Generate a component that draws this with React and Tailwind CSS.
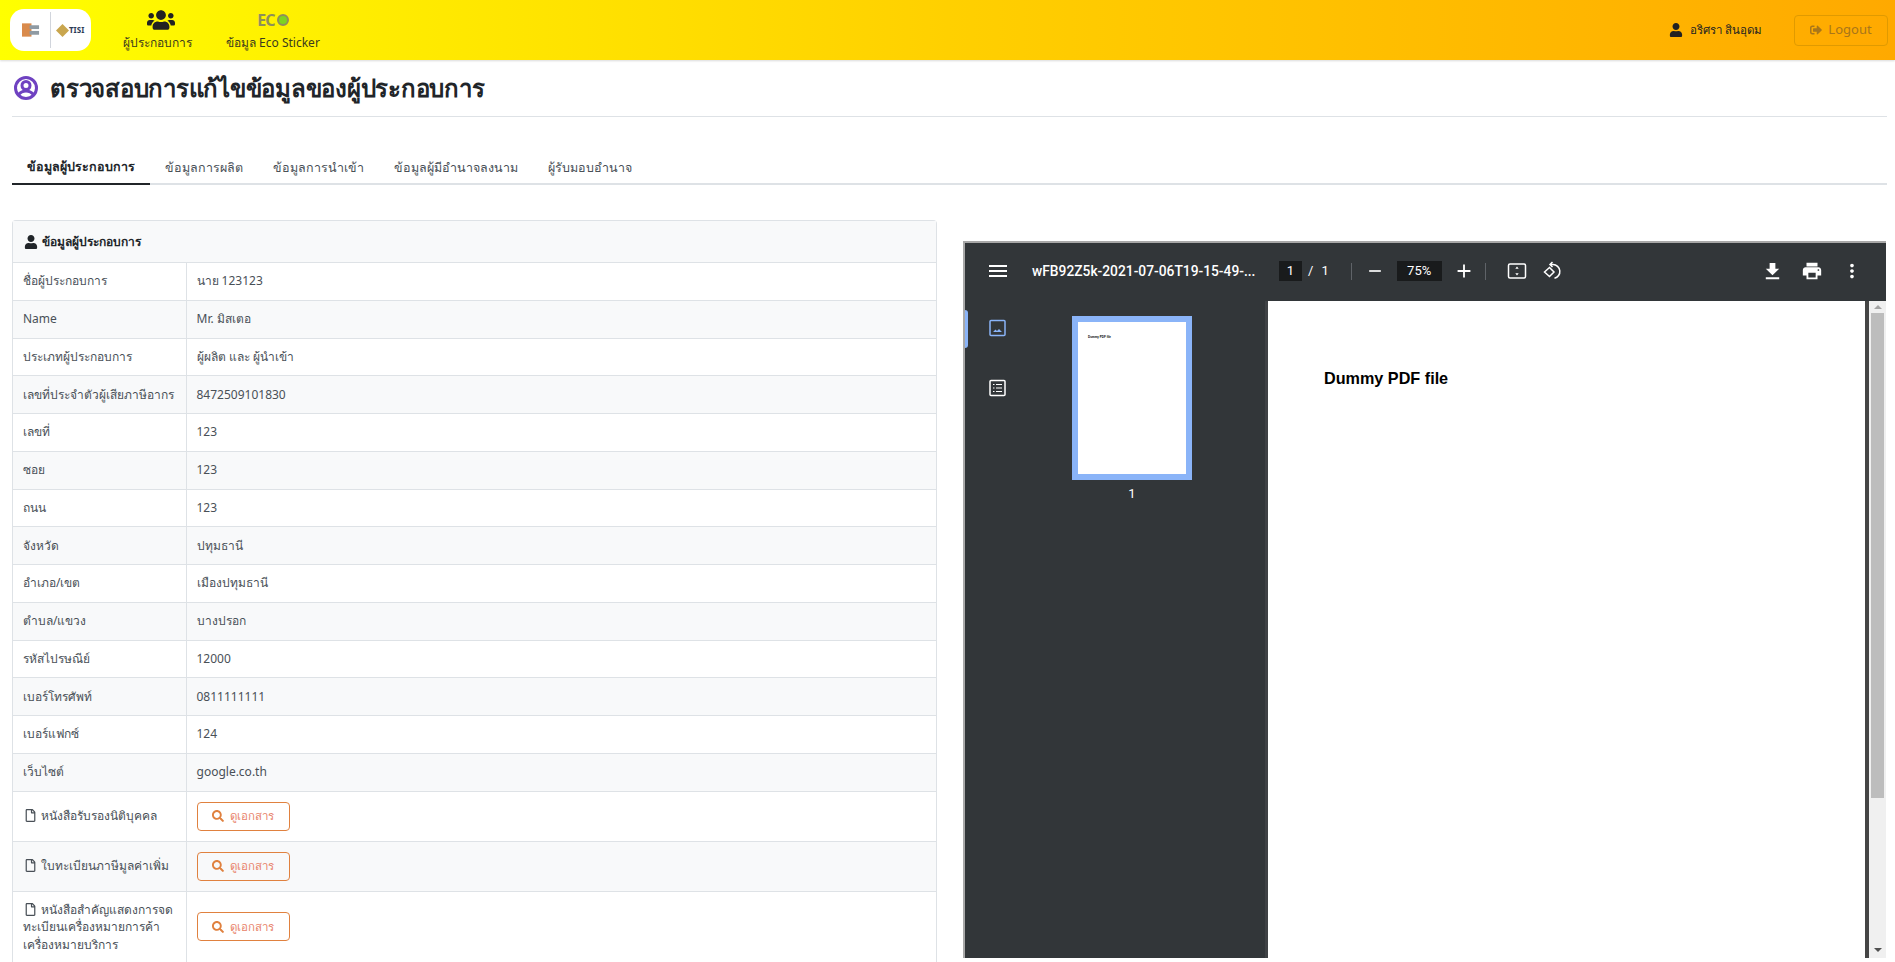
import React from 'react'
import { FaUsers, FaUser, FaRegFile, FaSearch, FaSignOutAlt } from 'react-icons/fa'
import { MdMenu, MdFileDownload, MdPrint, MdMoreVert, MdAdd, MdRemove } from 'react-icons/md'

const rows = [
  ['ชื่อผู้ประกอบการ', 'นาย 123123'],
  ['Name', 'Mr. มิสเตอ'],
  ['ประเภทผู้ประกอบการ', 'ผู้ผลิต และ ผู้นำเข้า'],
  ['เลขที่ประจำตัวผู้เสียภาษีอากร', '8472509101830'],
  ['เลขที่', '123'],
  ['ซอย', '123'],
  ['ถนน', '123'],
  ['จังหวัด', 'ปทุมธานี'],
  ['อำเภอ/เขต', 'เมืองปทุมธานี'],
  ['ตำบล/แขวง', 'บางปรอก'],
  ['รหัสไปรษณีย์', '12000'],
  ['เบอร์โทรศัพท์', '0811111111'],
  ['เบอร์แฟกซ์', '124'],
  ['เว็บไซต์', 'google.co.th'],
]

const docs = [
  ['หนังสือรับรองนิติบุคคล'],
  ['ใบทะเบียนภาษีมูลค่าเพิ่ม'],
  ['หนังสือสำคัญแสดงการจด', 'ทะเบียนเครื่องหมายการค้า', 'เครื่องหมายบริการ'],
]

const tabs = ['ข้อมูลผู้ประกอบการ', 'ข้อมูลการผลิต', 'ข้อมูลการนำเข้า', 'ข้อมูลผู้มีอำนาจลงนาม', 'ผู้รับมอบอำนาจ']

function Logo() {
  return (
    <div className="flex h-[42px] w-[81px] items-center rounded-[14px] bg-white pl-[12px]">
      <svg width="18" height="14" viewBox="0 0 19 14">
        <rect x="0" y="0" width="10" height="14" fill="#d98a4b" />
        <rect x="8" y="2" width="10" height="4" fill="#8f9aa3" />
        <rect x="8" y="8" width="10" height="4" fill="#8f9aa3" />
      </svg>
      <div className="ml-[10px] mr-[5px] h-[36px] w-px bg-gray-300" />
      <svg width="13" height="13" viewBox="0 0 12 12">
        <path d="M6 0 12 6 6 12 0 6Z" fill="#c9a64e" />
      </svg>
      <span className="text-[8px] font-bold text-[#2b3a55]">TISI</span>
    </div>
  )
}

function NavItem({ icon, label, className }) {
  return (
    <div className={`-mt-[3px] flex flex-col items-center text-[12px] leading-[17px] text-[#3b3b1e] ${className}`}>
      <div className="flex h-[27px] items-center">{icon}</div>
      <span>{label}</span>
    </div>
  )
}

function Header() {
  return (
    <div className="flex h-[60px] shrink-0 items-center bg-gradient-to-r from-[#ffff00] via-[#ffd000] to-[#ffa900] pl-[10px] pr-[7px] shadow-[0_1px_2px_rgba(0,0,0,0.15)]">
      <Logo />
      <NavItem className="ml-[32px]" icon={<FaUsers className="ml-[6px] text-[28px] text-[#222]" />} label="ผู้ประกอบการ" />
      <NavItem
        className="ml-[34px]"
        icon={
          <span className="flex items-center text-[16px] font-bold leading-none tracking-[-1px] text-[#8f8f5a]">
            EC
            <span className="ml-[2px] block h-[12px] w-[12px] rounded-full border-2 border-[#8f8f5a] bg-[#7ed321]" />
          </span>
        }
        label="ข้อมูล Eco Sticker"
      />
      <div className="ml-auto flex items-center text-[11.5px] text-[#222]">
        <FaUser className="mr-[7px] text-[14px]" />
        <span>อริศรา สินอุดม</span>
      </div>
      <button className="ml-[32px] flex h-[31px] w-[94px] items-center justify-center gap-[6px] rounded border border-[#e09a00] text-[13px] text-[#a9761a]">
        <FaSignOutAlt className="text-[12px]" />
        Logout
      </button>
    </div>
  )
}

function DocButton() {
  return (
    <button className="flex h-[29px] w-[93px] items-center justify-center gap-[6px] rounded border border-[#e0813f] text-[11.5px] text-[#e8836b]">
      <FaSearch className="text-[12px] text-[#e0813f]" />
      ดูเอกสาร
    </button>
  )
}

function InfoCard() {
  return (
    <div className="w-[925px] shrink-0 rounded-t border border-b-0 border-[#dee2e6] text-[12px] text-[#495057]">
      <div className="flex h-[41px] items-center gap-[4px] bg-[#f8f9fa] pl-[11px] font-bold text-[#212529]">
        <FaUser className="text-[14px]" />
        ข้อมูลผู้ประกอบการ
      </div>
      <table className="w-full border-collapse">
        <tbody>
          {rows.map(([label, value], i) => (
            <tr key={label} className={`h-[37.75px] border-t border-[#dee2e6] ${i % 2 ? 'bg-[#f8f9fa]' : 'bg-white'}`}>
              <td className="w-[173px] whitespace-nowrap border-r border-[#dee2e6] pl-[10px]">{label}</td>
              <td className="pl-[10px]">{value}</td>
            </tr>
          ))}
          {docs.map((lines, i) => (
            <tr key={lines[0]} className={`h-[50px] border-t border-[#dee2e6] ${i === 1 ? 'bg-[#f8f9fa]' : 'bg-white'}`}>
              <td className="w-[173px] whitespace-nowrap border-r border-[#dee2e6] py-[9px] pl-[10px] leading-[17.5px]">
                <FaRegFile className="ml-[1px] mr-[4px] inline align-[-2px] text-[13px]" />
                {lines.map((line, j) => (
                  <React.Fragment key={line}>
                    {j > 0 && <br />}
                    {line}
                  </React.Fragment>
                ))}
              </td>
              <td className="pl-[10px]">
                <DocButton />
              </td>
            </tr>
          ))}
        </tbody>
      </table>
    </div>
  )
}

function PdfViewer() {
  return (
    <div className="flex h-[717px] w-[923px] flex-col border-t-2 border-l-2 border-[#a8a8a8] font-['Roboto',sans-serif] text-white">
      <div className="flex h-[58px] shrink-0 items-center bg-[#323639] pb-[2px] text-[13px]">
        <MdMenu className="ml-[21px] text-[24px]" />
        <span className="ml-[22px] w-[230px] text-[13.8px] font-medium">wFB92Z5k-2021-07-06T19-15-49-...</span>
        <span className="ml-[17px] flex h-[20px] w-[23px] items-center justify-center bg-[#191b1c]">1</span>
        <span className="ml-[6px]">/</span>
        <span className="ml-[8px]">1</span>
        <div className="ml-[22px] h-[17px] w-px bg-[#5f6368]" />
        <MdRemove className="ml-[13px] text-[20px]" />
        <span className="ml-[12px] flex h-[20px] w-[45px] items-center justify-center bg-[#191b1c]">75%</span>
        <MdAdd className="ml-[11px] text-[22px]" />
        <div className="ml-[10px] h-[17px] w-px bg-[#5f6368]" />
        <svg className="ml-[21px]" width="20" height="20" viewBox="0 0 20 20" fill="none" stroke="white" strokeWidth="1.5">
          <rect x="1.5" y="3" width="17" height="14" rx="1.5" />
          <path d="M10 5.500 8.300 7.800h3.400ZM10 14.500l-1.700-2.300h3.400Z" fill="white" stroke="none" />
        </svg>
        <svg className="ml-[16px]" width="20" height="20" viewBox="0 0 20 20" fill="none" stroke="white" strokeWidth="1.5">
          <path d="M9.500 1 7 3.500 9.500 6M7 3.500h3a7 7 0 0 1 1.500 13.800" />
          <path d="M1.500 11 6.500 6.500l4.500 4.500-4.500 4.500Z" />
        </svg>
        <MdFileDownload className="ml-auto text-[23px]" />
        <MdPrint className="ml-[17px] text-[22px]" />
        <MdMoreVert className="ml-[18px] mr-[23px] text-[22px]" />
      </div>
      <div className="flex min-h-0 flex-1">
        <div className="flex w-[300px] shrink-0 bg-[#323639]">
          <div className="relative w-[52px] shrink-0 pt-[18px]">
            <div className="absolute left-0 top-[9px] h-[38px] w-[3px] rounded-r bg-[#8ab4f8]" />
            <svg className="ml-[24px]" width="17" height="18" viewBox="0 0 17 18" fill="none" stroke="#8ab4f8" strokeWidth="1.5">
              <rect x="1" y="1.5" width="15" height="15" rx="1" />
              <path d="M4 13l2.500-2.500L8 12l2-2 3 3Z" fill="#8ab4f8" stroke="none" />
            </svg>
            <svg className="ml-[24px] mt-[42px]" width="17" height="18" viewBox="0 0 17 18" fill="none" stroke="white" strokeWidth="1.5">
              <rect x="1" y="1.5" width="15" height="15" rx="1" />
              <path d="M4 5.500h1.500M7 5.500h6M4 9h1.500M7 9h6M4 12.500h1.500M7 12.500h6" strokeWidth="1.2" />
            </svg>
          </div>
          <div className="flex flex-1 flex-col items-center pr-[18px] pt-[15px]">
            <div className="h-[164px] w-[120px] border-[6px] border-[#8ab4f8] bg-white pl-[10px] pt-[13px]">
              <span className="block font-['Liberation_Sans',sans-serif] text-[3px] font-bold leading-[4px] text-black">Dummy PDF file</span>
            </div>
            <span className="mt-[4px] text-[13px]">1</span>
          </div>
        </div>
        <div className="w-[3px] shrink-0 bg-[#3f4245]" />
        <div className="flex-1 bg-white pl-[56px] pt-[65px] font-['Liberation_Sans',sans-serif] text-[16.2px] font-bold text-black">
          Dummy PDF file
        </div>
        <div className="w-[4px] shrink-0 bg-[#454545]" />
        <div className="flex w-[17px] shrink-0 flex-col items-center bg-[#f0f0f0]">
          <span className="mt-[4px] h-0 w-0 border-x-[4px] border-b-[4px] border-x-transparent border-b-[#a3a3a3]" />
          <div className="mt-[4px] h-[485px] w-[13px] bg-[#bdbdbd]" />
          <span className="mb-[6px] mt-auto h-0 w-0 border-x-[4px] border-t-[4px] border-x-transparent border-t-[#505050]" />
        </div>
      </div>
    </div>
  )
}

export default function App() {
  return (
    <div className="flex h-screen flex-col overflow-hidden bg-white font-['Noto_Sans',sans-serif] text-[#212529]">
      <Header />
      <div className="pl-[12px] pr-[8px]">
        <div className="flex h-[57px] items-center gap-[12px] border-b border-[#dee2e6] pl-[2px]">
          <svg width="24" height="24" viewBox="0 0 24 24" fill="none" stroke="#6f42c1" strokeWidth="3">
            <circle cx="12" cy="12" r="10.500" />
            <circle cx="12" cy="9.500" r="4" />
            <path d="M4.500 19c2-3 4.500-4 7.500-4s5.500 1 7.500 4" />
          </svg>
          <h1 className="text-[24px] font-bold tracking-[-0.25px] text-[#212529]">ตรวจสอบการแก้ไขข้อมูลของผู้ประกอบการ</h1>
        </div>
        <div className="mt-[35px] flex h-[33px] border-b-2 border-[#dee2e6] text-[12.5px] text-[#495057]">
          {tabs.map((t, i) => (
            <div key={t} className={`-mb-[2px] flex items-center px-[15px] ${i === 0 ? 'border-b-2 border-[#212529] font-bold text-[#212529]' : ''}`}>
              {t}
            </div>
          ))}
        </div>
        <div className="mt-[35px] flex items-start gap-[26px]">
          <InfoCard />
          <div className="mt-[21px]">
            <PdfViewer />
          </div>
        </div>
      </div>
    </div>
  )
}
